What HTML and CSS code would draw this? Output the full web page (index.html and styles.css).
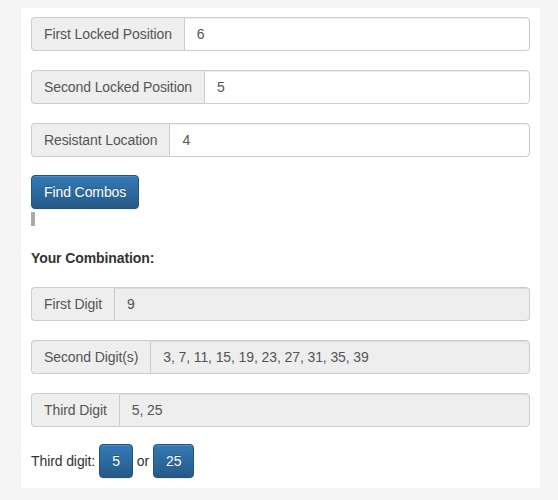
FILE: index.html
```html
<!DOCTYPE html>
<html>
<head>
<meta charset="utf-8">
<link rel="stylesheet" href="styles.css">
</head>
<body>
<div class="panel">
  <div class="input-group">
    <span class="addon">First Locked Position</span>
    <input class="field" type="text" value="6">
  </div>
  <div class="input-group">
    <span class="addon">Second Locked Position</span>
    <input class="field" type="text" value="5">
  </div>
  <div class="input-group last-input">
    <span class="addon">Resistant Location</span>
    <input class="field" type="text" value="4">
  </div>
  <button class="btn" type="button">Find Combos</button>
  <div class="progress"></div>
  <p class="result-title">Your Combination:</p>
  <div class="input-group">
    <span class="addon">First Digit</span>
    <input class="field" type="text" value="9" readonly>
  </div>
  <div class="input-group">
    <span class="addon">Second Digit(s)</span>
    <input class="field" type="text" value="3, 7, 11, 15, 19, 23, 27, 31, 35, 39" readonly>
  </div>
  <div class="input-group last-result">
    <span class="addon">Third Digit</span>
    <input class="field" type="text" value="5, 25" readonly>
  </div>
  <div class="third-row">
    <span>Third digit:</span>
    <button class="btn small" type="button">5</button>
    <span>or</span>
    <button class="btn small" type="button">25</button>
  </div>
</div>
</body>
</html>
```

FILE: styles.css
```css
html, body {
  margin: 0;
  padding: 0;
  background: #f5f5f5;
  font-family: "Liberation Sans", Arial, sans-serif;
  font-size: 14px;
  line-height: 20px;
  color: #333;
}

.panel {
  background: #fff;
  width: 499px;
  margin: 8px 0 0 21px;
  padding: 9px 10px 10px 10px;
  letter-spacing: -0.1px;
}

.input-group {
  display: flex;
  height: 34px;
  margin-bottom: 19px;
}

.input-group.last-input {
  margin-bottom: 18px;
}

.input-group.last-result {
  margin-bottom: 17px;
}

.addon {
  display: flex;
  align-items: center;
  padding: 0 12px;
  background: #eee;
  color: #555;
  border: 1px solid #ccc;
  border-right: 0;
  border-radius: 4px 0 0 4px;
  white-space: nowrap;
}

.field {
  flex: 1;
  min-width: 0;
  margin: 0;
  height: 34px;
  box-sizing: border-box;
  padding: 6px 12px;
  font-family: "Liberation Sans", Arial, sans-serif;
  font-size: 14px;
  letter-spacing: -0.1px;
  color: #555;
  background: #fff;
  border: 1px solid #ccc;
  border-radius: 0 4px 4px 0;
  box-shadow: inset 0 1px 1px rgba(0, 0, 0, .075);
  outline: none;
}

.field[readonly] {
  background: #eee;
}

.btn {
  display: block;
  height: 34px;
  box-sizing: border-box;
  padding: 6px 12px;
  margin: 0;
  font-family: "Liberation Sans", Arial, sans-serif;
  font-size: 14px;
  line-height: 20px;
  letter-spacing: -0.1px;
  color: #fff;
  background-color: #2e6da4;
  background-image: linear-gradient(to bottom, #337ab7 0, #265a88 100%);
  border: 1px solid #245580;
  border-radius: 4px;
  text-shadow: 0 -1px 0 rgba(0, 0, 0, .2);
  box-shadow: inset 0 1px 0 rgba(255, 255, 255, .15), 0 1px 1px rgba(0, 0, 0, .075);
}

.progress {
  width: 4px;
  height: 14px;
  margin-top: 3px;
  background: #aaa;
}

.result-title {
  margin: 22px 0 19px 0;
  font-weight: bold;
}

.third-row {
  display: flex;
  align-items: center;
  gap: 4px;
  height: 34px;
}
```
